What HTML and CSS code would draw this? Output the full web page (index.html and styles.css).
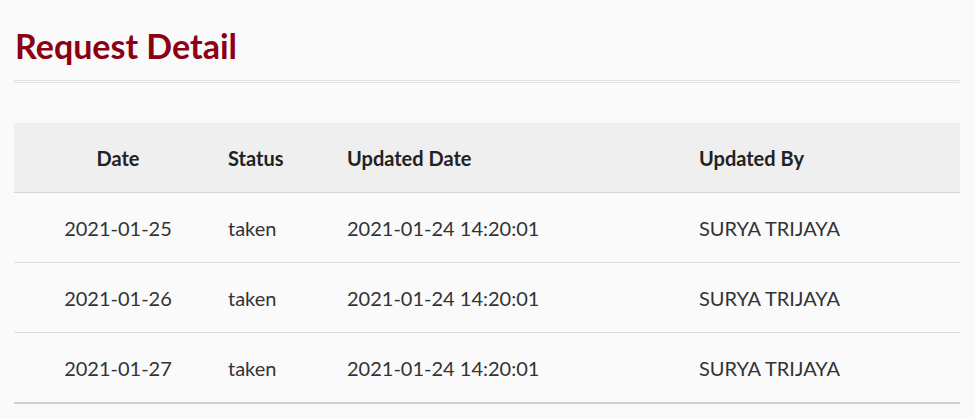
FILE: index.html
```html
<!DOCTYPE html>
<html>
<head>
<meta charset="utf-8">
<link rel="stylesheet" href="styles.css">
</head>
<body>
<div class="page">
  <h1 class="title">Request Detail</h1>
  <div class="rule"></div>
  <table class="detail">
    <colgroup>
      <col class="c1"><col class="c2"><col class="c3"><col class="c4">
    </colgroup>
    <thead>
      <tr><th class="center">Date</th><th>Status</th><th>Updated Date</th><th>Updated By</th></tr>
    </thead>
    <tbody>
      <tr><td class="center">2021-01-25</td><td>taken</td><td>2021-01-24 14:20:01</td><td>SURYA TRIJAYA</td></tr>
      <tr><td class="center">2021-01-26</td><td>taken</td><td>2021-01-24 14:20:01</td><td>SURYA TRIJAYA</td></tr>
      <tr><td class="center">2021-01-27</td><td>taken</td><td>2021-01-24 14:20:01</td><td>SURYA TRIJAYA</td></tr>
    </tbody>
  </table>
</div>
</body>
</html>
```
FILE: styles.css
```css
html, body {
  margin: 0;
  padding: 0;
  background: #fafafa;
}
body {
  font-family: Lato, "Open Sans", sans-serif;
  color: #333;
}
.page {
  width: 946px;
  padding: 24px 0 0 14px;
}
.title {
  margin: 0;
  font-size: 34px;
  line-height: 44px;
  font-weight: 700;
  color: #8b0012;
  padding-left: 1px;
}
.rule {
  margin-top: 12px;
  height: 1px;
  border: 1px solid #e3e3e3;
  background: #fafafa;
}
.detail {
  margin-top: 40px;
  width: 946px;
  border-collapse: collapse;
  table-layout: fixed;
  font-size: 20px;
  line-height: 24px;
  border-bottom: 2px solid #d0d0d0;
}
.c1 { width: 208px; }
.c2 { width: 119px; }
.c3 { width: 352px; }
.c4 { width: 267px; }
.detail th {
  background: #efefef;
  color: #222;
  font-weight: 700;
  text-align: left;
  height: 69px;
  padding: 0 0 0 6px;
  border-bottom: 1px solid #d6d6d6;
}
.detail td {
  color: #333;
  text-align: left;
  height: 69px;
  padding: 0 0 0 6px;
  border-bottom: 1px solid #dcdcdc;
}
.detail tbody tr:last-child td {
  border-bottom: 2px solid #d0d0d0;
}
.detail .center {
  text-align: center;
  padding: 0;
}
```
